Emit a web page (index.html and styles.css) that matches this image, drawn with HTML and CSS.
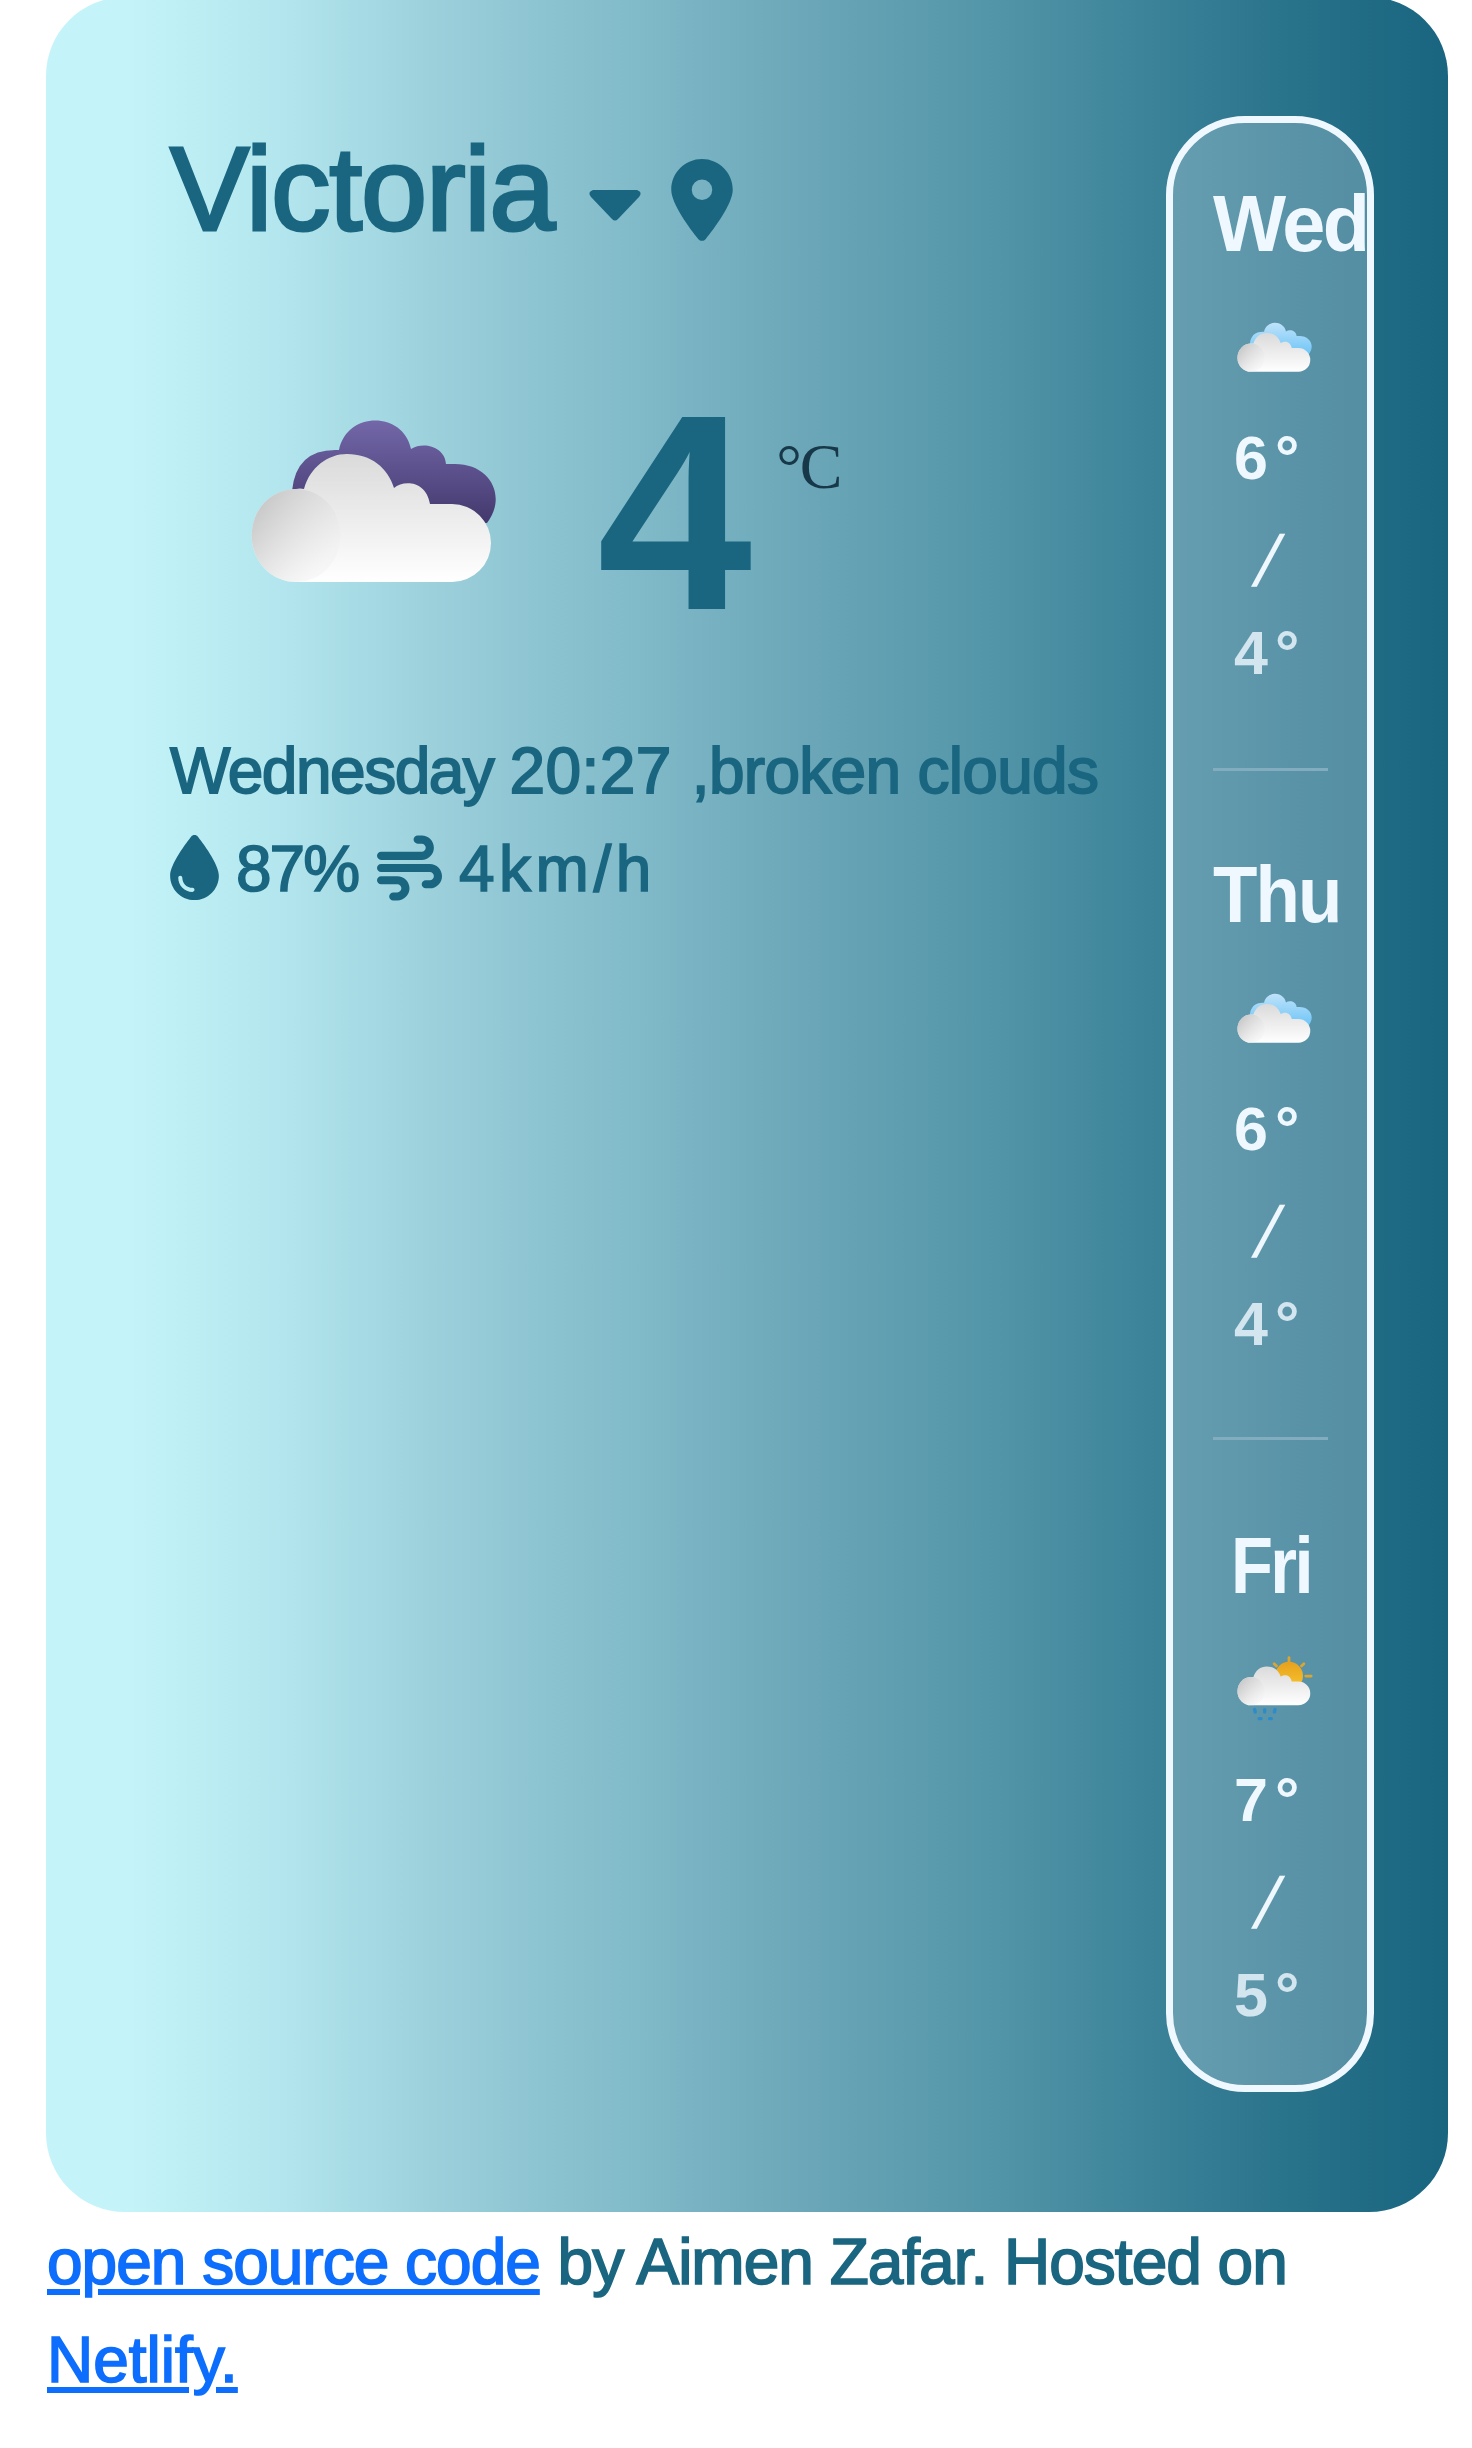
FILE: index.html
```html
<!DOCTYPE html>
<html lang="en">
<head>
<meta charset="utf-8">
<title>Weather</title>
<link rel="stylesheet" href="styles.css">
</head>
<body>
<svg class="defs" width="0" height="0">
  <defs>
    <linearGradient id="white" gradientUnits="userSpaceOnUse" x1="0" y1="35" x2="0" y2="163"><stop offset="0" stop-color="#dadada"/><stop offset="1" stop-color="#fff"/></linearGradient>
    <linearGradient id="puff" gradientUnits="userSpaceOnUse" x1="12" y1="84" x2="80" y2="136"><stop offset="0" stop-color="#c9c9c9"/><stop offset="1" stop-color="#ededed" stop-opacity=".35"/></linearGradient>
    <linearGradient id="purple" gradientUnits="userSpaceOnUse" x1="0" y1="2" x2="0" y2="104"><stop offset="0" stop-color="#7367a9"/><stop offset="1" stop-color="#43396d"/></linearGradient>
    <linearGradient id="blue" gradientUnits="userSpaceOnUse" x1="0" y1="2" x2="0" y2="104"><stop offset="0" stop-color="#bfe3fa"/><stop offset="1" stop-color="#6fc5f7"/></linearGradient>
    <linearGradient id="sun" x1="0" y1="0" x2="0" y2="1"><stop offset="0" stop-color="#e6a11f"/><stop offset="1" stop-color="#fac62b"/></linearGradient>
    <g id="front">
      <path fill="url(#white)" d="M46 163A44.500 46.500 0 0 1 46 70Q50 69 54 70C60 48 78 35 97 35C121 35 138 49 144 69C153 61 176 61 180 85H202A39 39 0 0 1 202 163Z"/>
      <ellipse cx="46" cy="116.500" rx="44.500" ry="46.500" fill="url(#puff)"/>
    </g>
    <path id="back" d="M42 72Q46 29 89 31C97 -8 153 -8 161 30C174 22 195 28 196 45H205C241 45 257 78 237 104L180 100L60 75Z"/>
  </defs>
</svg>
<main class="card">
  <section class="current">
    <h1 class="city">Victoria
      <svg class="caret" viewBox="0 0 52 31"><path d="M4 0H48Q54 2 50 7L29 29Q26 32 23 29L2 7Q-2 2 4 0Z"/></svg>
      <svg class="pin" viewBox="0 0 384 512"><path d="M215.700 499.200C267 435 384 279.400 384 192C384 86 298 0 192 0S0 86 0 192c0 87.400 117 243 168.300 307.200c12.300 15.300 35.100 15.300 47.400 0zM192 128a64 64 0 1 1 0 128 64 64 0 1 1 0-128z"/></svg>
    </h1>
    <div class="now">
      <svg class="now-icon" viewBox="0 0 250 166"><use href="#back" fill="url(#purple)"/><use href="#front"/></svg>
      <span class="degrees">4</span>
      <span class="unit">°C</span>
    </div>
    <p class="summary"><span class="weekday">Wednesday </span><span class="clock">20:27</span> ,broken clouds</p>
    <p class="details">
      <svg class="drop" viewBox="0 0 384 512"><path d="M192 512C86 512 0 426 0 320C0 228.800 130.200 57.700 166.600 11.700C172.600 4.200 181.500 0 191.100 0h1.800c9.600 0 18.500 4.200 24.500 11.700C253.800 57.700 384 228.800 384 320c0 106-86 192-192 192zM96 336c0-8.800-7.200-16-16-16s-16 7.200-16 16c0 61.900 50.100 112 112 112c8.800 0 16-7.200 16-16s-7.200-16-16-16c-44.200 0-80-35.800-80-80z"/></svg>
      <span class="humidity">87%</span>
      <svg class="wind" viewBox="0 0 512 512"><path d="M288 32c0 17.700 14.300 32 32 32h32c17.700 0 32 14.300 32 32s-14.300 32-32 32H32c-17.700 0-32 14.300-32 32s14.300 32 32 32H352c53 0 96-43 96-96s-43-96-96-96H320c-17.700 0-32 14.300-32 32zm64 352c0 17.700 14.300 32 32 32h32c53 0 96-43 96-96s-43-96-96-96H32c-17.700 0-32 14.300-32 32s14.300 32 32 32H416c17.700 0 32 14.300 32 32s-14.300 32-32 32H384c-17.700 0-32 14.300-32 32zM128 512h32c53 0 96-43 96-96s-43-96-96-96H32c-17.700 0-32 14.300-32 32s14.300 32 32 32H160c17.700 0 32 14.300 32 32s-14.300 32-32 32H128c-17.700 0-32 14.300-32 32s14.300 32 32 32z"/></svg>
      <span class="speed">4km/h</span>
    </p>
  </section>
  <aside class="forecast">
    <div class="day">
      <h2 class="name wed">Wed</h2>
      <svg class="icon" viewBox="0 -40 250 246"><use href="#back" fill="url(#blue)"/><use href="#front"/></svg>
      <div class="temp">6<span class="deg">°</span></div>
      <div class="slash">/</div>
      <div class="temp low">4<span class="deg">°</span></div>
    </div>
    <hr class="rule">
    <div class="day">
      <h2 class="name thu">Thu</h2>
      <svg class="icon" viewBox="0 -40 250 246"><use href="#back" fill="url(#blue)"/><use href="#front"/></svg>
      <div class="temp">6<span class="deg">°</span></div>
      <div class="slash">/</div>
      <div class="temp low">4<span class="deg">°</span></div>
    </div>
    <hr class="rule second">
    <div class="day">
      <h2 class="name fri">Fri</h2>
      <svg class="icon" viewBox="0 -40 250 246">
        <g stroke="#dca52f" stroke-width="9" stroke-linecap="round"><path d="M171-22v14M122-2l8 8M220-2l-8 8M226 39h18"/></g>
        <circle cx="171" cy="38" r="46" fill="url(#sun)"/>
        <use href="#front" y="-28"/>
        <g stroke="#2c8cc9" stroke-width="11" stroke-linecap="round"><path d="M58 149l2 8M91 149v8M125 149l-2 8M73 179h6M107 179h6"/></g>
      </svg>
      <div class="temp">7<span class="deg">°</span></div>
      <div class="slash">/</div>
      <div class="temp low">5<span class="deg">°</span></div>
    </div>
  </aside>
</main>
<footer class="credit"><a class="source" href="#">open source code</a> <span class="by">by Aimen Zafar. Hosted on</span><br><a class="host" href="#">Netlify.</a></footer>
</body>
</html>
```

FILE: styles.css
```css
* { box-sizing: border-box; }
body {
  margin: 0;
  padding: 0 24px 0 46px;
  height: 2448px;
  overflow: hidden;
  background: #fff;
  color: #1a6680;
  font: 64px/97.5px "Liberation Sans", Arial, sans-serif;
}
.defs { display: block; }
.card {
  display: flex;
  justify-content: space-between;
  height: 2215px;
  margin-top: -3px;
  padding: 119px 74px 120px 124px;
  border-radius: 79px;
  background: linear-gradient(90deg, #c4f4f9 0%, #c4f4f9 6%, #b2e5ed 17%, #97ccd8 30%, #81bac9 42%, #6ba7b8 54%, #5496a9 67%, #3d849a 78%, #28728a 89%, #19647f 100%);
}
.current { width: 960px; flex: none; }
h1, h2, p { margin: 0; }
svg { fill: currentColor; flex: none; overflow: visible; }
.city {
  display: flex;
  height: 146px;
  font-size: 119px;
  font-weight: 400;
  line-height: 146px;
  letter-spacing: -1.3px;
  -webkit-text-stroke: 3px #1a6680;
}
.caret { width: 52px; height: 31px; margin: 74px 0 0 35px; }
.pin { width: 62px; height: 82px; margin: 43px 0 0 30px; }
.now {
  display: flex;
  height: 280px;
  margin-top: 110px;
  align-items: flex-start;
}
.now-icon { width: 250px; height: 166px; margin: 47px 0 0 80px; }
.degrees { margin-left: 97px; font-size: 279px; font-weight: 700; line-height: 280px; }
.unit { margin: 46px 0 0 24px; color: #173849; font-family: "Liberation Serif", serif; letter-spacing: -2px; }
.summary { margin-top: 71px; white-space: nowrap; letter-spacing: -.7px; -webkit-text-stroke: 1.8px #1a6680; }
.weekday { letter-spacing: -1.5px; }
.clock { margin-right: 3px; letter-spacing: .4px; }
.details { display: flex; height: 97px; align-items: flex-start; -webkit-text-stroke: 1.6px #1a6680; }
.drop { width: 49px; height: 65px; margin: 14px 17px 0 0; }
.humidity { width: 141px; letter-spacing: -2px; }
.wind { width: 65px; height: 66px; margin: 14px 17px 0 0; }
.speed { letter-spacing: 4.5px; }
.forecast {
  width: 208px;
  flex: none;
  padding: 52px 40px 0;
  border: 7px solid #f0f8ff;
  border-radius: 79px;
  background: rgba(240, 248, 255, .25);
  color: #f0f8ff;
}
.day { display: flex; flex-direction: column; align-items: flex-start; }
.name {
  min-width: 116px;
  font-size: 79px;
  line-height: 98px;
  letter-spacing: -2px;
  text-align: center;
}
.wed { letter-spacing: -2.5px; transform: scaleX(.98); transform-origin: left; }
.thu { letter-spacing: -2px; transform: scaleX(.92); transform-origin: left; }
.fri { letter-spacing: -3px; transform: scaleX(.87); }
.icon { width: 76px; height: 75px; margin: 37px 0 25px 24px; }
.temp { padding-left: 21px; font-size: 61px; font-weight: 700; line-height: 97px; white-space: nowrap; }
.deg { margin-left: 7px; }
.slash { padding-left: 45px; font-size: 72px; line-height: 108px; transform: skewX(-15deg); }
.low { margin-top: -10px; color: #d3e5ee; }
.rule { width: 115px; height: 3px; margin: 66px 0 75px; border: 0; background: #83adbf; }
.rule.second { margin: 64px 0 77px; }
.credit { margin-top: 2px; padding-left: 1px; white-space: nowrap; -webkit-text-stroke: 1.7px currentColor; }
.credit a { color: #0d6efd; text-decoration: underline; text-decoration-thickness: 6px; text-underline-offset: 5px; }
.source { letter-spacing: -1px; }
.by { letter-spacing: -1px; }
```
